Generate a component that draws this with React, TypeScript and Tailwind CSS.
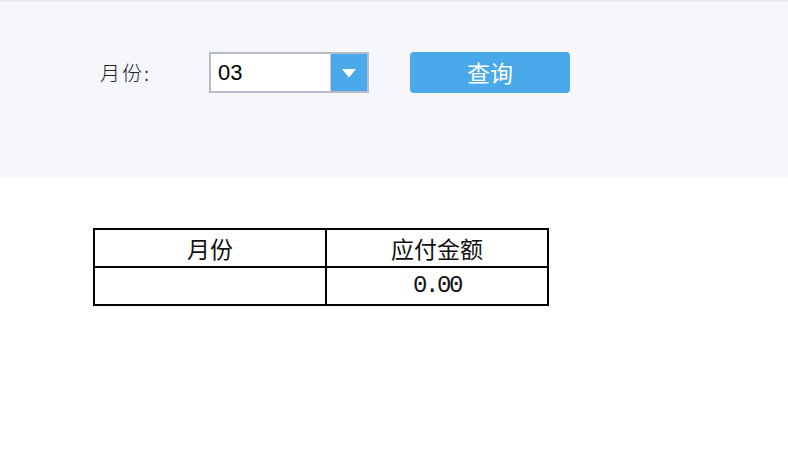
export default function App() {
  const cjk = { fontFamily: '"Noto Sans CJK SC", "Microsoft YaHei", sans-serif' };

  return (
    <div className="min-h-[452px] w-full bg-white" style={cjk}>
      {/* query bar */}
      <div className="h-[178px] border-t-2 border-[#e8eaee] bg-[#f5f7fa] pt-[50px]">
        <div className="flex h-[41px] items-center pl-[100px]">
          <label className="w-[109px] text-[20px] font-light tracking-[2px] text-[#222]">月份:</label>
          <div className="flex h-[41px] w-[160px] border-2 border-[#b8bcc9] bg-white">
            <div
              className="flex flex-1 items-center pl-[7px] text-[22px] text-black"
              style={{ fontFamily: '"Liberation Sans", Arial, sans-serif' }}
            >
              03
            </div>
            <div className="flex w-[37px] items-center justify-center border-l border-[#c9ccd6] bg-[#49a9ea]">
              <svg width="16" height="10" viewBox="0 0 16 10">
                <path d="M1 1 L15 1 L8 9.5 Z" fill="#fff" />
              </svg>
            </div>
          </div>
          <button className="ml-[41px] flex h-[41px] w-[160px] items-center justify-center rounded-[4px] bg-[#49a9ea] text-[23px] text-white">
            查询
          </button>
        </div>
      </div>

      {/* result table */}
      <div className="ml-[93px] mt-[50px] w-[456px] border-2 border-black text-[23px] text-[#111]">
        <div className="grid grid-cols-[232px_1fr]">
          <div className="flex h-[38px] items-center justify-center border-b-2 border-r-2 border-black">月份</div>
          <div className="flex h-[38px] items-center justify-center border-b-2 border-black">应付金额</div>
          <div className="h-[36px] border-r-2 border-black"></div>
          <div
            className="flex h-[36px] items-center justify-center text-[24px] tracking-[-2.4px]"
            style={{ fontFamily: '"Liberation Mono", monospace' }}
          >
            0.00
          </div>
        </div>
      </div>
    </div>
  );
}
